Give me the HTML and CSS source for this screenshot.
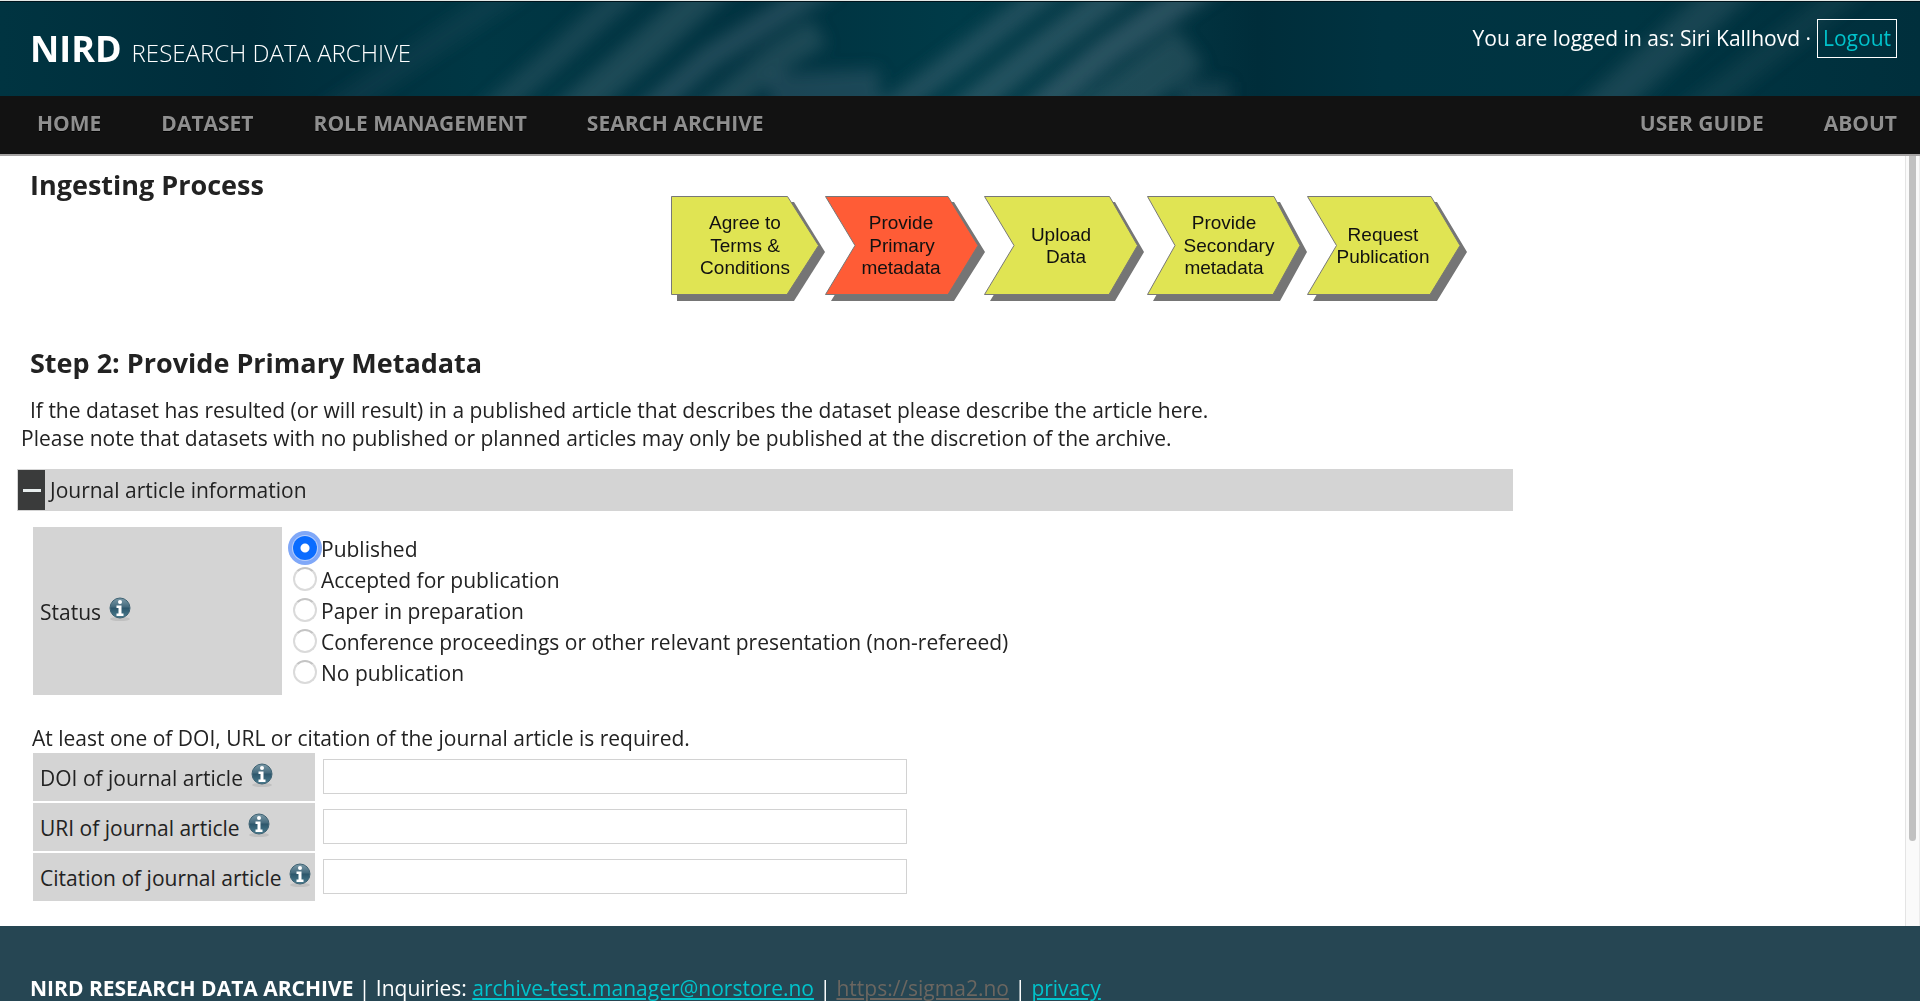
FILE: index.html
```html
<!DOCTYPE html>
<html lang="en">
<head>
<meta charset="utf-8">
<title>NIRD Research Data Archive</title>
<link rel="stylesheet" href="styles.css">
</head>
<body>
<svg class="defs" width="0" height="0" aria-hidden="true">
  <defs>
    <linearGradient id="info-fill" x1="0" y1="0" x2="0" y2="1">
      <stop offset="0" stop-color="#7b9aa8"/>
      <stop offset="0.45" stop-color="#446a7d"/>
      <stop offset="0.5" stop-color="#2c566b"/>
      <stop offset="1" stop-color="#4b7d90"/>
    </linearGradient>
    <symbol id="info" viewBox="0 0 22 24">
      <ellipse cx="11" cy="22" rx="10" ry="2" fill="#c0c0c0"/>
      <circle cx="11" cy="11" r="10" fill="url(#info-fill)" stroke="#3f6374"/>
      <circle cx="11" cy="5" r="2" fill="#fff"/>
      <path d="M7.500 8.500h5v8h2v2.500h-7v-2.500h2v-5.500h-2z" fill="#fff"/>
    </symbol>
  </defs>
</svg>

<header class="banner">
  <svg class="banner-art" viewBox="0 0 1920 94" preserveAspectRatio="none" aria-hidden="true">
    <defs>
      <linearGradient id="sea">
        <stop offset="0" stop-color="#003441"/>
        <stop offset="0.13" stop-color="#002d3b"/>
        <stop offset="0.25" stop-color="#003744"/>
        <stop offset="0.4" stop-color="#003240"/>
        <stop offset="0.5" stop-color="#003b48"/>
        <stop offset="0.6" stop-color="#033643"/>
        <stop offset="0.655" stop-color="#002d3a"/>
        <stop offset="0.72" stop-color="#003341"/>
        <stop offset="0.85" stop-color="#003542"/>
        <stop offset="1" stop-color="#002f3c"/>
      </linearGradient>
      <filter id="soft" filterUnits="userSpaceOnUse" x="0" y="-80" width="1920" height="260"><feGaussianBlur stdDeviation="8"/></filter>
    </defs>
    <rect width="1920" height="94" fill="url(#sea)"/>
    <g fill="none" stroke="#5a7583" stroke-width="24" filter="url(#soft)">
      <path d="M310 125L540 -30" opacity="0.120"/>
      <path d="M480 120L555 55L650 -30" opacity="0.260"/>
      <path d="M560 120L652 40L730 -30" stroke-width="34" opacity="0.320"/>
      <path d="M635 120L710 55L767 20L830 -20" opacity="0.360"/>
      <path d="M700 120L778 55L819 30" stroke-width="30" opacity="0.320"/>
      <path d="M770 95L880 90" stroke-width="46" opacity="0.300"/>
      <path d="M875 120L968 50L1060 -20" opacity="0.360"/>
      <path d="M950 120L1037 50L1130 -20" stroke-width="28" opacity="0.400"/>
      <path d="M1022 120L1106 50L1215 -25" stroke-width="28" opacity="0.440"/>
      <path d="M1090 120L1190 45" stroke-width="46" opacity="0.320"/>
      <path d="M1180 100L1230 100" stroke-width="40" opacity="0.220"/>
      <path d="M1580 125L1630 80L1750 -30" stroke-width="36" opacity="0.260"/>
      <path d="M1680 120L1860 -20" opacity="0.140"/>
    </g>
  </svg>
  <a class="brand" href="#"><strong>NIRD</strong> <span>RESEARCH DATA ARCHIVE</span></a>
  <div class="session"><span>You are logged in as: Siri Kallhovd ·</span> <a class="logout" href="#">Logout</a></div>
</header>

<nav class="menu">
  <a href="#">HOME</a>
  <a href="#">DATASET</a>
  <a href="#">ROLE MANAGEMENT</a>
  <a href="#">SEARCH ARCHIVE</a>
  <a class="menu-right" href="#">USER GUIDE</a>
  <a href="#">ABOUT</a>
</nav>

<div class="viewport">
  <main class="content">
    <div class="top">
      <h1>Ingesting Process</h1>
      <svg class="steps" width="798" height="108" viewBox="670 195 798 108" role="img" aria-label="Ingest steps">
        <g class="shadow">
          <path d="M677 202H794L825 252L794 301H677z"/>
          <path d="M831 202H954L985 252L954 301H831L861 252z"/>
          <path d="M990 202H1115L1144 252L1115 301H990L1020 252z"/>
          <path d="M1153 202H1280L1307 252L1280 301H1153L1181 252z"/>
          <path d="M1313 202H1437L1467 252L1437 301H1313L1342 252z"/>
        </g>
        <g class="arrow">
          <path d="M671.500 196.500H787.500L818.500 245.500L787 294.500H671.500z"/>
          <path class="current" d="M825.500 196.500H948L978 245.500L948 294.500H825.500L855 245.500z"/>
          <path d="M984.500 196.500H1109.500L1137.500 245.500L1109 294.500H984.500L1014 245.500z"/>
          <path d="M1147.500 196.500H1274L1300 245.500L1273 294.500H1147.500L1175 245.500z"/>
          <path d="M1307.500 196.500H1431L1460 245.500L1430 294.500H1307.500L1336.500 245.500z"/>
        </g>
        <g class="caption">
          <text><tspan x="745" y="229">Agree to</tspan><tspan x="745" y="252">Terms &amp;</tspan><tspan x="745" y="274">Conditions</tspan></text>
          <text><tspan x="901" y="229">Provide</tspan><tspan x="902" y="252">Primary</tspan><tspan x="901" y="274">metadata</tspan></text>
          <text><tspan x="1061" y="241">Upload</tspan><tspan x="1066" y="263">Data</tspan></text>
          <text><tspan x="1224" y="229">Provide</tspan><tspan x="1229" y="252">Secondary</tspan><tspan x="1224" y="274">metadata</tspan></text>
          <text><tspan x="1383" y="241">Request</tspan><tspan x="1383" y="263">Publication</tspan></text>
        </g>
      </svg>
    </div>

    <h2>Step 2: Provide Primary Metadata</h2>
    <p class="intro">If the dataset has resulted (or will result) in a published article that describes the dataset please describe the article here.<br>Please note that datasets with no published or planned articles may only be published at the discretion of the archive.</p>

    <div class="section-bar">
      <button class="toggle" type="button" aria-label="Collapse Journal article information"></button>
      <span>Journal article information</span>
    </div>

    <div class="status" role="radiogroup" aria-labelledby="status-label">
      <div class="cell status-cell"><span id="status-label">Status</span><svg class="info"><use href="#info"/></svg></div>
      <div class="options">
        <label><input type="radio" name="status" checked>Published</label>
        <label><input type="radio" name="status">Accepted for publication</label>
        <label><input type="radio" name="status">Paper in preparation</label>
        <label><input type="radio" name="status">Conference proceedings or other relevant presentation (non-refereed)</label>
        <label><input type="radio" name="status">No publication</label>
      </div>
    </div>

    <p class="hint">At least one of DOI, URL or citation of the journal article is required.</p>
    <div class="fields">
      <div class="cell"><label for="doi">DOI of journal article</label><svg class="info"><use href="#info"/></svg></div>
      <input id="doi" type="text">
      <div class="cell"><label for="uri">URI of journal article</label><svg class="info"><use href="#info"/></svg></div>
      <input id="uri" type="text">
      <div class="cell"><label for="citation">Citation of journal article</label><svg class="info"><use href="#info"/></svg></div>
      <input id="citation" type="text">
    </div>
  </main>
  <div class="scrollbar" aria-hidden="true"><div class="thumb"></div></div>
</div>

<footer class="footer">
  <strong>NIRD RESEARCH DATA ARCHIVE</strong> | Inquiries: <a href="#">archive-test.manager@norstore.no</a> | <a class="visited" href="#">https://sigma2.no</a> | <a href="#">privacy</a>
</footer>
</body>
</html>
```
FILE: styles.css
```css
* {
  box-sizing: border-box;
}

body {
  margin: 0;
  height: 100vh;
  display: flex;
  flex-direction: column;
  overflow: hidden;
  background: #fff;
  color: #222;
  font: 21px/28px "Open Sans", "Noto Sans", sans-serif;
}

.defs {
  position: absolute;
}

.banner {
  position: relative;
  flex: none;
  height: 96px;
  padding: 19px 23px 0 30px;
  border-top: 1px solid #e4e8e6;
  box-shadow: inset 0 1px #00141c;
  display: flex;
  justify-content: space-between;
  align-items: flex-start;
  color: #fff;
}

.banner-art {
  position: absolute;
  inset: 1px 0 0;
  width: 100%;
  height: 94px;
  z-index: -1;
}

.brand {
  padding-top: 5px;
  display: flex;
  align-items: baseline;
  gap: 10px;
  color: #fff;
  text-decoration: none;
  font-size: 24px;
  line-height: 48px;
  font-weight: 300;
}

.brand strong {
  font-size: 36px;
  font-weight: 700;
}

.session {
  display: flex;
  gap: 6px;
  font-weight: 500;
  line-height: 37px;
}

.logout {
  margin-top: -1px;
  padding: 0 5px;
  border: 1px solid #fff;
  color: #00c3cc;
  font-weight: 400;
  text-decoration: none;
}

.menu {
  flex: none;
  height: 60px;
  padding: 0 23px 4px 37px;
  display: flex;
  align-items: center;
  gap: 60px;
  background: #121212;
  border-bottom: 2px solid #a4a2a2;
  font-weight: 700;
}

.menu a {
  color: #8f8f8f;
  text-decoration: none;
  text-shadow: 0 1px #000;
}

.menu-right {
  margin-left: auto;
}

.viewport {
  flex: 1;
  min-height: 0;
  display: flex;
}

.content {
  flex: 1;
  padding: 9px 18px 0 17px;
}

.top {
  display: flex;
  gap: 9px;
  padding-left: 13px;
}

h1,
h2 {
  margin: 0;
  font-size: 27px;
  line-height: 40px;
  font-weight: 700;
}

h1 {
  flex: 0 0 34%;
}

h2 {
  margin: 40px 0 13px 13px;
}

.steps {
  flex: none;
  margin-top: 30px;
}

.shadow {
  fill: #757575;
}

.arrow {
  fill: #e0e453;
  stroke: #777;
}

.arrow .current {
  fill: #ff5c36;
}

.caption {
  fill: #111;
  font: 19px "Liberation Sans", Arial, sans-serif;
  text-anchor: middle;
}

.intro {
  margin: 0 0 17px;
  padding-left: 4px;
  text-indent: 9px;
}

.section-bar {
  width: 80%;
  height: 42px;
  padding: 1px;
  display: flex;
  align-items: center;
  gap: 5px;
  background: #d4d4d4;
}

.toggle {
  width: 27px;
  height: 40px;
  padding: 0;
  border: 0;
  display: grid;
  place-items: center;
  background: #3a3b3b;
}

.toggle::before {
  content: "";
  width: 18px;
  height: 3px;
  background: #e8eeee;
}

.status {
  margin: 16px 0 0 16px;
  display: flex;
}

.cell {
  display: flex;
  align-items: center;
  gap: 8px;
  padding: 2px 0 0 7px;
  background: #d4d4d4;
}

.status-cell {
  width: 249px;
  height: 168px;
}

.info {
  flex: none;
  width: 22px;
  height: 24px;
  margin-bottom: 6px;
}

.options {
  padding: 7px 0 0 11px;
  line-height: 31px;
}

.options label {
  display: flex;
  align-items: center;
  gap: 4px;
}

.options input {
  appearance: none;
  width: 24px;
  height: 24px;
  margin: 0 0 3px;
  border: 2px solid #dadada;
  border-top-color: #c4c4c4;
  border-radius: 50%;
  background: #fff;
}

.options input:checked {
  border: 0;
  background: radial-gradient(circle, #fff 4px, #0a6cff 5px);
  box-shadow: 0 0 0 1px #b9cffb, 0 0 0 5px #80a8f8;
}

.hint {
  margin: 29px 0 1px 15px;
}

.fields {
  margin-left: 16px;
  display: grid;
  grid-template-columns: 282px 584px;
  gap: 2px 8px;
  align-items: center;
}

.fields .cell {
  height: 48px;
}

.fields input {
  height: 35px;
  margin: 0 0 1px;
  padding: 0 8px;
  border: 1px solid #d2d2d2;
  background: #fff;
  font: inherit;
}

.scrollbar {
  flex: none;
  width: 15px;
  padding: 0 3px;
  background: #fafafa;
  border-left: 1px solid #e4e4e4;
  border-right: 1px solid #ebebeb;
}

.thumb {
  height: 89%;
  background: #c1c1c1;
  border-radius: 0 0 4px 4px;
}

.footer {
  flex: none;
  height: 75px;
  padding: 48px 30px 0;
  background: #264653;
  color: #fff;
}

.footer a {
  color: #00c3cc;
}

.footer .visited {
  color: #6b6660;
}
```
